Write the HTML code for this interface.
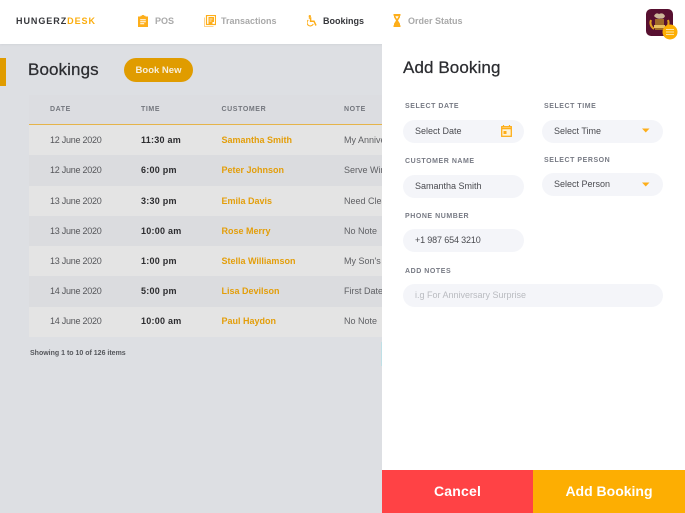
<!DOCTYPE html>
<html>
<head>
<meta charset="utf-8">
<style>
html,body{margin:0;padding:0;width:685px;height:513px;overflow:hidden;background:#dddfe3;font-family:"Liberation Sans",sans-serif}
.a{position:absolute;white-space:nowrap;line-height:14px}
#hd{position:absolute;left:0;top:0;width:685px;height:44px;background:#fff;box-shadow:0 0 3px rgba(120,125,140,.2)}
.nav{font-size:9px;color:#a9a9a9;font-weight:bold;letter-spacing:0;top:14px}
.row{position:absolute;left:29px;width:353px}
.th{font-size:7px;color:#73767d;letter-spacing:.6px;font-weight:bold}
.d{font-size:9px;color:#55565a;left:50px;letter-spacing:-.25px}
.t{font-size:9px;color:#2b2b2e;font-weight:bold;left:141px;letter-spacing:.25px}
.c{font-size:9px;color:#e39e0a;font-weight:bold;left:221.5px}
.n{font-size:9px;color:#5f6064;left:344px;width:38px;overflow:hidden}
#panel{position:absolute;left:382px;top:44px;width:303px;height:469px;background:#fff}
.lb{font-size:7px;color:#777a84;font-weight:bold;letter-spacing:.55px}
.in{position:absolute;height:23px;border-radius:12px;background:#f4f5f9}
.v{font-size:9px;color:#4a4b50}
.h{font-size:17px;line-height:20px;color:#2b2c30;letter-spacing:.1px;-webkit-text-stroke:.25px #2b2c30}
</style>
</head>
<body>
<div class="a" style="left:0;top:58px;width:6px;height:28px;background:#e09c00"></div>
<div class="a h" style="left:28px;top:60px">Bookings</div>
<div class="a" style="left:124px;top:58px;width:69px;height:24px;border-radius:12px;background:#e09c00;color:#f7efdc;font-size:9.5px;font-weight:bold;line-height:25px;text-align:center">Book New</div>

<div class="row" style="top:95px;height:29px;background:#dcdde1"></div>
<div class="row" style="top:124px;height:1px;background:#e5b44a"></div>
<div class="a th" style="left:50px;top:103px">DATE</div>
<div class="a th" style="left:141px;top:103px">TIME</div>
<div class="a th" style="left:221.5px;top:103px">CUSTOMER</div>
<div class="a th" style="left:344px;top:103px">NOTE</div>

<div class="row" style="top:125px;height:30px;background:#e4e4e4"></div>
<div class="row" style="top:155px;height:31px;background:#dbdcdf"></div>
<div class="row" style="top:186px;height:30px;background:#e4e4e4"></div>
<div class="row" style="top:216px;height:30px;background:#dbdcdf"></div>
<div class="row" style="top:246px;height:30px;background:#e4e4e4"></div>
<div class="row" style="top:276px;height:31px;background:#dbdcdf"></div>
<div class="row" style="top:307px;height:30px;background:#e4e4e4"></div>

<div class="a d" style="top:133px">12 June 2020</div><div class="a t" style="top:133px">11:30 am</div><div class="a c" style="top:133px">Samantha Smith</div><div class="a n" style="top:133px">My Anniversary</div>
<div class="a d" style="top:163px">12 June 2020</div><div class="a t" style="top:163px">6:00 pm</div><div class="a c" style="top:163px">Peter Johnson</div><div class="a n" style="top:163px">Serve Wine</div>
<div class="a d" style="top:194px">13 June 2020</div><div class="a t" style="top:194px">3:30 pm</div><div class="a c" style="top:194px">Emila Davis</div><div class="a n" style="top:194px">Need Clean</div>
<div class="a d" style="top:224px">13 June 2020</div><div class="a t" style="top:224px">10:00 am</div><div class="a c" style="top:224px">Rose Merry</div><div class="a n" style="top:224px">No Note</div>
<div class="a d" style="top:254px">13 June 2020</div><div class="a t" style="top:254px">1:00 pm</div><div class="a c" style="top:254px">Stella Williamson</div><div class="a n" style="top:254px">My Son's Birthday</div>
<div class="a d" style="top:284px">14 June 2020</div><div class="a t" style="top:284px">5:00 pm</div><div class="a c" style="top:284px">Lisa Devilson</div><div class="a n" style="top:284px">First Date</div>
<div class="a d" style="top:314px">14 June 2020</div><div class="a t" style="top:314px">10:00 am</div><div class="a c" style="top:314px">Paul Haydon</div><div class="a n" style="top:314px">No Note</div>
<div class="a" style="left:30px;top:347px;font-size:7px;font-weight:bold;color:#55575c">Showing 1 to 10 of 126 items</div>
<div class="a" style="left:381px;top:342px;width:1px;height:24px;background:#bfe0e6"></div>

<div id="hd"></div>
<div class="a" style="left:16px;top:14px;font-size:9px;font-weight:bold;letter-spacing:.95px;color:#36373b">HUNGERZ<span style="color:#fbad0e">DESK</span></div>

<svg class="a" style="left:138px;top:15px" width="10" height="12" viewBox="0 0 10 12"><path d="M0 1.500h2.500V.8h1.200a1.400 1.400 0 0 1 2.600 0h1.200v.7H10V12H0z" fill="#fdae1a"/><path d="M2.200 4.800h5.600M2.200 6.800h5.600M2.200 8.800h4" stroke="#fff" stroke-width="1"/></svg>
<div class="a nav" style="left:155px">POS</div>

<svg class="a" style="left:204px;top:15px" width="12" height="12" viewBox="0 0 12 12"><path d="M.5 2.500v9h9" fill="none" stroke="#fdd28a" stroke-width="1"/><rect x="2.500" y=".5" width="9" height="9" fill="#fff" stroke="#fdae1a" stroke-width="1.200"/><path d="M4.500 2h5.500v5H8.500v2H4.500z" fill="#fdae1a"/><path d="M5.500 4h3M5.500 6h2" stroke="#fff" stroke-width=".8"/></svg>
<div class="a nav" style="left:221px">Transactions</div>

<svg class="a" style="left:307px;top:15px" width="11" height="12" viewBox="0 0 11 12"><circle cx="2.800" cy="1.200" r="1.200" fill="#fdae1a"/><path d="M1.800 3h1.800v3.200h3.400l2 4.300" fill="none" stroke="#fdae1a" stroke-width="1.500"/><path d="M1.300 5a3.300 3.300 0 1 0 5 4" fill="none" stroke="#fdae1a" stroke-width="1.100"/></svg>
<div class="a nav" style="left:323px;color:#36373b">Bookings</div>

<svg class="a" style="left:393px;top:14px" width="8" height="13" viewBox="0 0 8 13"><path d="M.5 0h7v1.800H7v1.500L5 6.500l2 3.200v1.500h.5V13h-7v-1.800H1V9.700l2-3.200-2-3.200V1.800H.5z" fill="#fdae1a"/><path d="M2.300 2.200h3.400L4 5z" fill="#fff"/></svg>
<div class="a nav" style="left:408px">Order Status</div>

<svg class="a" style="left:646px;top:9px" width="27" height="27" viewBox="0 0 27 27"><rect width="27" height="27" rx="5" fill="#571030"/><path d="M8 7q2-4 5-2q4-2 6 2q-1 3-4 2.500q-4 1-7-2.500z" fill="#cdb79a"/><path d="M5 11q-2 5 3 9M22 11q2 5-3 9" fill="none" stroke="#e2a020" stroke-width="2"/><rect x="9" y="10" width="9" height="11" fill="#a06a28"/><rect x="8" y="16" width="11" height="3" fill="#e8c060"/></svg>
<svg class="a" style="left:662px;top:24px" width="16" height="16" viewBox="0 0 16 16"><circle cx="8" cy="8" r="7.500" fill="#fdae02"/><path d="M4 5.500h8M4 8h8M4 10.500h8" stroke="#fbe3a5" stroke-width="1.100"/></svg>

<div id="panel"></div>
<div class="a h" style="left:403px;top:58px">Add Booking</div>

<div class="a lb" style="left:405px;top:100px">SELECT DATE</div>
<div class="a lb" style="left:544px;top:100px">SELECT TIME</div>
<div class="in" style="left:403px;top:120px;width:121px"></div>
<div class="in" style="left:542px;top:120px;width:121px"></div>
<div class="a v" style="left:415px;top:124px">Select Date</div>
<svg class="a" style="left:501px;top:125px" width="11" height="12" viewBox="0 0 11 12"><path d="M2.500 0v2M8.500 0v2" stroke="#fdae1a" stroke-width="1.200"/><rect x=".7" y="1.700" width="9.600" height="9.600" fill="#fff3d6" stroke="#fdae1a" stroke-width="1.300"/><path d="M.7 3.500h9.600" stroke="#fdae1a" stroke-width="1.500"/><rect x="2.500" y="6" width="3" height="3" fill="#fdae1a"/></svg>
<div class="a v" style="left:554px;top:124px">Select Time</div>
<svg class="a" style="left:642px;top:128px" width="8" height="5" viewBox="0 0 8 5"><path d="M0 .5h7.500L3.750 4.500z" fill="#fdae1a"/></svg>

<div class="a lb" style="left:405px;top:155px">CUSTOMER NAME</div>
<div class="a lb" style="left:544px;top:154px">SELECT PERSON</div>
<div class="in" style="left:403px;top:175px;width:121px"></div>
<div class="in" style="left:542px;top:173px;width:121px"></div>
<div class="a v" style="left:415px;top:179px">Samantha Smith</div>
<div class="a v" style="left:554px;top:177px">Select Person</div>
<svg class="a" style="left:642px;top:182px" width="8" height="5" viewBox="0 0 8 5"><path d="M0 .5h7.500L3.750 4.500z" fill="#fdae1a"/></svg>

<div class="a lb" style="left:405px;top:210px">PHONE NUMBER</div>
<div class="in" style="left:403px;top:229px;width:121px"></div>
<div class="a v" style="left:415px;top:233px;letter-spacing:-.15px">+1 987 654 3210</div>

<div class="a lb" style="left:405px;top:265px">ADD NOTES</div>
<div class="in" style="left:403px;top:284px;width:260px"></div>
<div class="a v" style="left:415px;top:288px;color:#b9bbc0">i.g For Anniversary Surprise</div>

<div class="a" style="left:382px;top:470px;width:151px;height:43px;background:#ff4245;color:#fff;font-size:14px;letter-spacing:.2px;font-weight:bold;line-height:43px;text-align:center">Cancel</div>
<div class="a" style="left:533px;top:470px;width:152px;height:43px;background:#fdae02;color:#fff;font-size:14px;font-weight:bold;line-height:43px;text-align:center">Add Booking</div>
</body>
</html>
